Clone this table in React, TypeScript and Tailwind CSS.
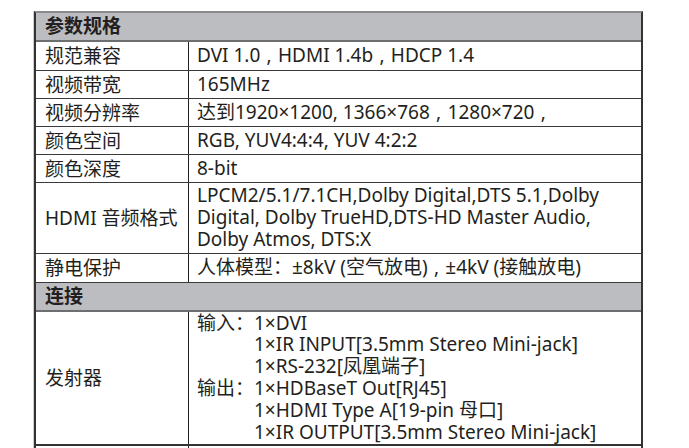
const font = { fontFamily: '"Noto Sans", "Noto Sans CJK SC", sans-serif' };

type Row = { label: string; lines: string[]; h: string };

const specs: Row[] = [
  { label: '规范兼容', lines: ['DVI 1.0\u2004,\u2004HDMI 1.4b\u2004,\u2004HDCP 1.4'], h: 'h-[29px]' },
  { label: '视频带宽', lines: ['165MHz'], h: 'h-[28px]' },
  { label: '视频分辨率', lines: ['达到1920×1200, 1366×768\u2004,\u20041280×720\u2004,'], h: 'h-[28px]' },
  { label: '颜色空间', lines: ['RGB, YUV4:4:4, YUV 4:2:2'], h: 'h-[28px]' },
  { label: '颜色深度', lines: ['8-bit'], h: 'h-[28px]' },
  {
    label: 'HDMI 音频格式',
    lines: [
      'LPCM2/5.1/7.1CH,Dolby Digital,DTS 5.1,Dolby',
      'Digital, Dolby TrueHD,DTS-HD Master Audio,',
      'Dolby Atmos, DTS:X',
    ],
    h: 'h-[71px]',
  },
  { label: '静电保护', lines: ['人体模型：±8kV (空气放电)\u2004,\u2004±4kV (接触放电)'], h: 'h-[29px]' },
];

function Header({ title }: { title: string }) {
  return (
    <div className="h-[29px] flex items-center bg-[#bcbdc0] border-b-2 border-[#6d6e70] px-[9px]">
      <span className="font-bold text-[19px] leading-none">{title}</span>
    </div>
  );
}

function SpecRow({ row }: { row: Row }) {
  return (
    <div className={`grid grid-cols-[153px_1fr] border-b border-[#3a3a3a] ${row.h}`}>
      <div className="flex items-center px-[9px] border-r border-[#231f20]">{row.label}</div>
      <div className="flex flex-col justify-center px-[8px] leading-[21.7px]">
        {row.lines.map((l) => (
          <span key={l} className="whitespace-nowrap">{l}</span>
        ))}
      </div>
    </div>
  );
}

export default function App() {
  return (
    <div className="h-[448px] overflow-hidden bg-white pt-[11px] pl-[34px] text-[#231f20]" style={font}>
      <div className="w-[609px] border-l-2 border-r-2 border-t-2 border-[#333] border-t-[#8a8a8a] text-[19px] leading-[22px] shadow-[-1px_0_0_#cfcfcf]">
        <Header title="参数规格" />
        {specs.map((r) => (
          <SpecRow key={r.label} row={r} />
        ))}
        <Header title="连接" />
        <div className="grid grid-cols-[153px_1fr] border-b-2 border-[#333] h-[134px]">
          <div className="flex items-center px-[9px] border-r border-[#231f20]">发射器</div>
          <div className="flex flex-col justify-center px-[8px] leading-[21.8px] whitespace-nowrap">
            <span>输入：1×DVI</span>
            <span className="pl-[57px]">1×IR INPUT[3.5mm Stereo Mini-jack]</span>
            <span className="pl-[57px]">1×RS-232[凤凰端子]</span>
            <span>输出：1×HDBaseT Out[RJ45]</span>
            <span className="pl-[57px]">1×HDMI Type A[19-pin 母口]</span>
            <span className="pl-[57px]">1×IR OUTPUT[3.5mm Stereo Mini-jack]</span>
          </div>
        </div>
        {/* next row continues below the fold */}
        <div className="grid grid-cols-[153px_1fr] h-[90px]">
          <div className="border-r border-[#231f20]" />
          <div />
        </div>
      </div>
    </div>
  );
}
